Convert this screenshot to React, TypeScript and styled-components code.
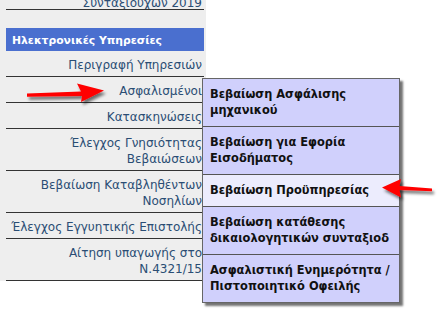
import styled, { createGlobalStyle } from "styled-components";

const GlobalStyle = createGlobalStyle`
  html, body {
    margin: 0;
    padding: 0;
    background: #ffffff;
  }
  body {
    font-family: "DejaVu Sans", Verdana, sans-serif;
    overflow: hidden;
  }
`;

const Page = styled.div`
  position: relative;
  width: 440px;
  height: 312px;
  overflow: hidden;
  background: #fff;
`;

const Sidebar = styled.div`
  width: 206px;
  background: #eeeeee;
  padding: 0 2px 0 6px;
  box-sizing: border-box;
  display: flex;
  flex-direction: column;
`;

// last line of the row above, scrolled mostly out of view
const CutRow = styled.div`
  height: 9px;
  overflow: hidden;
  display: flex;
  align-items: flex-end;
  justify-content: flex-end;
  border-bottom: 1px solid #333;
  color: #2a4d74;
  font-size: 12px;
  line-height: 16px;
  padding-right: 2px;
  span {
    display: block;
    margin-bottom: -2px;
  }
`;

const Spacer = styled.div`
  height: 18px;
`;

const Header = styled.div`
  height: 23px;
  background: #4a6fcf;
  color: #fff;
  font-weight: bold;
  font-size: 10.8px;
  display: flex;
  align-items: center;
  padding: 1px 0 0 6px;
  box-sizing: border-box;
`;

const Row = styled.div`
  padding: 6px 2px 3px 0;
  border-bottom: 1px solid #333;
  text-align: right;
  color: #2a4d74;
  font-size: 12px;
  line-height: 16px;
  white-space: nowrap;
`;

const Menu = styled.div`
  position: absolute;
  left: 202px;
  top: 78px;
  width: 198px;
  box-sizing: border-box;
  background: #d0d0fc;
  border: 1px solid #666;
  box-shadow: 3px 3px 2px rgba(0, 0, 0, 0.55);
`;

const MenuItem = styled.div<{ active?: boolean }>`
  padding: 7px 6px 8px 7px;
  background: ${(p) => (p.active ? "#ececfd" : "#d0d0fc")};
  border-top: 1px solid #555;
  &:first-child {
    border-top: none;
  }
  color: #111;
  font-weight: bold;
  font-size: 11.4px;
  line-height: 16px;
  white-space: nowrap;
`;

const Arrow = styled.svg<{ left: number; top: number }>`
  position: absolute;
  left: ${(p) => p.left}px;
  top: ${(p) => p.top}px;
  overflow: visible;
`;

const rows = [
  ["Περιγραφή Υπηρεσιών"],
  ["Ασφαλισμένοι"],
  ["Κατασκηνώσεις"],
  ["Έλεγχος Γνησιότητας", "Βεβαιώσεων"],
  ["Βεβαίωση Καταβληθέντων", "Νοσηλίων"],
  ["Έλεγχος Εγγυητικής Επιστολής"],
  ["Αίτηση υπαγωγής στο", "Ν.4321/15"],
];

const items = [
  ["Βεβαίωση Ασφάλισης", "μηχανικού"],
  ["Βεβαίωση για Εφορία", "Εισοδήματος"],
  ["Βεβαίωση Προϋπηρεσίας"],
  ["Βεβαίωση κατάθεσης", "δικαιολογητικών συνταξιοδ"],
  ["Ασφαλιστική Ενημερότητα /", "Πιστοποιητικό Οφειλής"],
];

const Shadow = ({ id }: { id: string }) => (
  <defs>
    <filter id={id} x="-20%" y="-50%" width="140%" height="200%">
      <feGaussianBlur in="SourceAlpha" stdDeviation="1.6" />
      <feOffset dx="2" dy="3" result="b" />
      <feComponentTransfer>
        <feFuncA type="linear" slope="0.55" />
      </feComponentTransfer>
      <feMerge>
        <feMergeNode />
        <feMergeNode in="SourceGraphic" />
      </feMerge>
    </filter>
  </defs>
);

const RightArrow = () => (
  <Arrow left={24} top={80} width={84} height={26}>
    <Shadow id="sh1" />
    <path
      d="M3 13.5 L57 11.5 L53 3.5 L80 10.5 L57 22 L58 16 L3 16.8 Z"
      fill="#ff0000"
      filter="url(#sh1)"
    />
  </Arrow>
);

const LeftArrow = () => (
  <Arrow left={380} top={176} width={56} height={24}>
    <Shadow id="sh2" />
    <path
      d="M2 11.5 L21 3 L19.5 10 L52 12.5 L52 15.2 L19.5 14 L21 21.5 Z"
      fill="#ff0000"
      filter="url(#sh2)"
    />
  </Arrow>
);

const App = () => (
  <>
    <GlobalStyle />
    <Page>
      <Sidebar>
        <CutRow>
          <span>Συνταξιούχων 2019</span>
        </CutRow>
        <Spacer />
        <Header>Ηλεκτρονικές Υπηρεσίες</Header>
        {rows.map((r, i) => (
          <Row key={i}>
            {r.map((line, j) => (
              <div key={j}>{line}</div>
            ))}
          </Row>
        ))}
      </Sidebar>
      <Menu>
        {items.map((it, i) => (
          <MenuItem key={i} active={i === 2}>
            {it.map((line, j) => (
              <div key={j}>{line}</div>
            ))}
          </MenuItem>
        ))}
      </Menu>
      <RightArrow />
      <LeftArrow />
    </Page>
  </>
);

export default App;
